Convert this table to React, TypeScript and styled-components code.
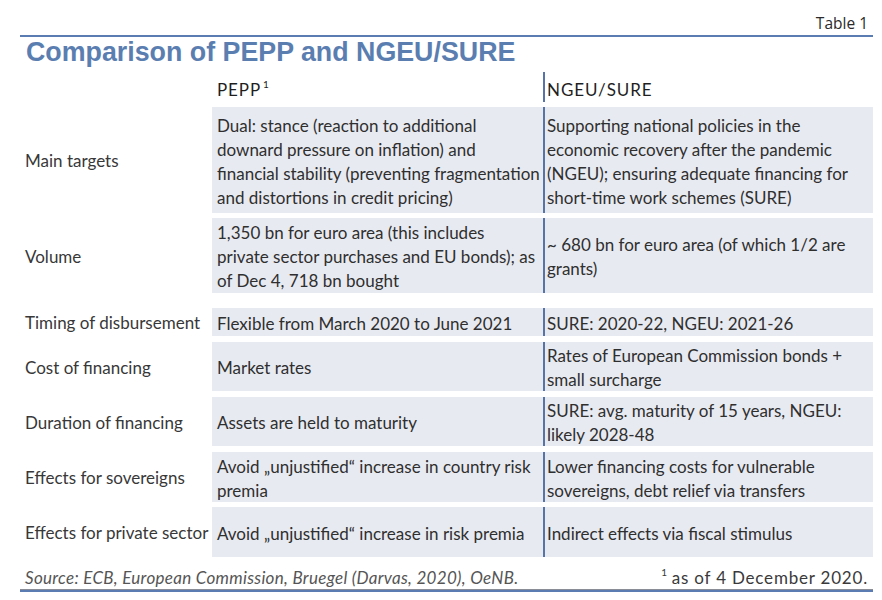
import React from "react";
import styled, { createGlobalStyle } from "styled-components";

const Global = createGlobalStyle`
  html, body { margin: 0; padding: 0; background: #ffffff; }
  body { font-family: Lato, "Noto Sans", sans-serif; color: #333333; }
`;

const Page = styled.div`
  width: 853px;
  margin-left: 20px;
  display: flex;
  flex-direction: column;
`;

const Caption = styled.div`
  height: 35px;
  display: flex;
  align-items: flex-end;
  justify-content: flex-end;
  padding-right: 5px;
  box-sizing: border-box;
  padding-bottom: 1px;
  font-family: "Open Sans", "Liberation Sans", sans-serif;
  font-size: 15.5px;
  color: #2a2a2a;
`;

const Rule = styled.div`
  height: 2px;
  background: #5b7cb3;
`;

const Title = styled.h1`
  margin: 0;
  padding-left: 6px;
  font-family: "Liberation Sans", Arial, sans-serif;
  font-weight: 700;
  font-size: 26.8px;
  line-height: 31px;
  color: #5b7eb1;
  height: 35px;
`;

const Row = styled.div<{ $h: number; $gap: number }>`
  display: grid;
  grid-template-columns: 192px 331px 330px;
  height: ${(p) => p.$h}px;
  margin-top: ${(p) => p.$gap}px;
  font-size: 17px;
  line-height: 24px;
`;

const Label = styled.div`
  display: flex;
  align-items: center;
  padding: 2px 0 0 5px;
  white-space: nowrap;
  color: #383838;
`;

const Cell = styled.div<{ $head?: boolean }>`
  display: flex;
  flex-direction: column;
  justify-content: ${(p) => (p.$head ? "flex-start" : "center")};
  padding: ${(p) => (p.$head ? "6px 5px 0" : "3px 5px 0")};
  background: ${(p) => (p.$head ? "transparent" : "#e8eaf1")};
  box-sizing: border-box;
  overflow: hidden;
  color: #2f2f2f;
`;

const SideCell = styled(Cell)`
  border-left: 2px solid #5874a6;
  padding-left: 2px;
`;

const Line = styled.span`
  white-space: nowrap;
`;

const Head = styled.span`
  font-size: 17px;
  letter-spacing: 0.9px;
  color: #1f1f1f;
`;

const Sup = styled.sup`
  font-size: 10px;
  margin-left: 2px;
  vertical-align: 8px;
  line-height: 0;
`;

const Footer = styled.div`
  display: flex;
  justify-content: space-between;
  align-items: flex-end;
  height: 33px;
  box-sizing: border-box;
  padding: 0 5px 0;
  border-bottom: 1px solid #8a8d96;
  font-size: 17px;
  line-height: 22px;
`;

const Source = styled.span`
  font-style: italic;
  letter-spacing: 0.3px;
  color: #555555;
`;

const Note = styled.span`
  color: #3a3a3a;
  letter-spacing: 0.8px;
`;

const NoteSup = styled.sup`
  font-size: 10px;
  vertical-align: 8px;
  line-height: 0;
  margin-right: 4px;
`;

type RowData = { label: string; a: string[]; b: string[]; h: number; gap: number };

const rows: RowData[] = [
  {
    label: "Main targets",
    a: [
      "Dual: stance (reaction to additional",
      "downard pressure on inflation) and",
      "financial stability (preventing fragmentation",
      "and distortions in credit pricing)",
    ],
    b: [
      "Supporting national policies in the",
      "economic recovery after the pandemic",
      "(NGEU); ensuring adequate financing for",
      "short-time work schemes (SURE)",
    ],
    h: 106,
    gap: 5,
  },
  {
    label: "Volume",
    a: [
      "1,350 bn for euro area (this includes",
      "private sector purchases and EU bonds); as",
      "of Dec 4, 718 bn bought",
    ],
    b: ["~ 680 bn for euro area (of which 1/2 are", "grants)"],
    h: 75,
    gap: 5,
  },
  {
    label: "Timing of disbursement",
    a: ["Flexible from March 2020 to June 2021"],
    b: ["SURE: 2020-22, NGEU: 2021-26"],
    h: 28,
    gap: 15,
  },
  {
    label: "Cost of financing",
    a: ["Market rates"],
    b: ["Rates of European Commission bonds +", "small surcharge"],
    h: 49,
    gap: 6,
  },
  {
    label: "Duration of financing",
    a: ["Assets are held to maturity"],
    b: ["SURE: avg. maturity of 15 years, NGEU:", "likely 2028-48"],
    h: 49,
    gap: 6,
  },
  {
    label: "Effects for sovereigns",
    a: ["Avoid \u201eunjustified\u201c increase in country risk", "premia"],
    b: ["Lower financing costs for vulnerable", "sovereigns, debt relief via transfers"],
    h: 50,
    gap: 6,
  },
  {
    label: "Effects for private sector",
    a: ["Avoid \u201eunjustified\u201c increase in risk premia"],
    b: ["Indirect effects via fiscal stimulus"],
    h: 50,
    gap: 5,
  },
];

export default function App() {
  return (
    <>
      <Global />
      <Page>
        <Caption>Table 1</Caption>
        <Rule />
        <Title>Comparison of PEPP and NGEU/SURE</Title>
        <Row $h={30} $gap={0}>
          <Label />
          <Cell $head>
            <Head>
              PEPP<Sup>1</Sup>
            </Head>
          </Cell>
          <SideCell $head>
            <Head>NGEU/SURE</Head>
          </SideCell>
        </Row>
        {rows.map((r) => (
          <Row key={r.label} $h={r.h} $gap={r.gap}>
            <Label>{r.label}</Label>
            <Cell>
              {r.a.map((l) => (
                <Line key={l}>{l}</Line>
              ))}
            </Cell>
            <SideCell>
              {r.b.map((l) => (
                <Line key={l}>{l}</Line>
              ))}
            </SideCell>
          </Row>
        ))}
        <Footer>
          <Source>Source: ECB, European Commission, Bruegel (Darvas, 2020), OeNB.</Source>
          <Note>
            <NoteSup>1</NoteSup>as of 4 December 2020.
          </Note>
        </Footer>
        <Rule />
      </Page>
    </>
  );
}
